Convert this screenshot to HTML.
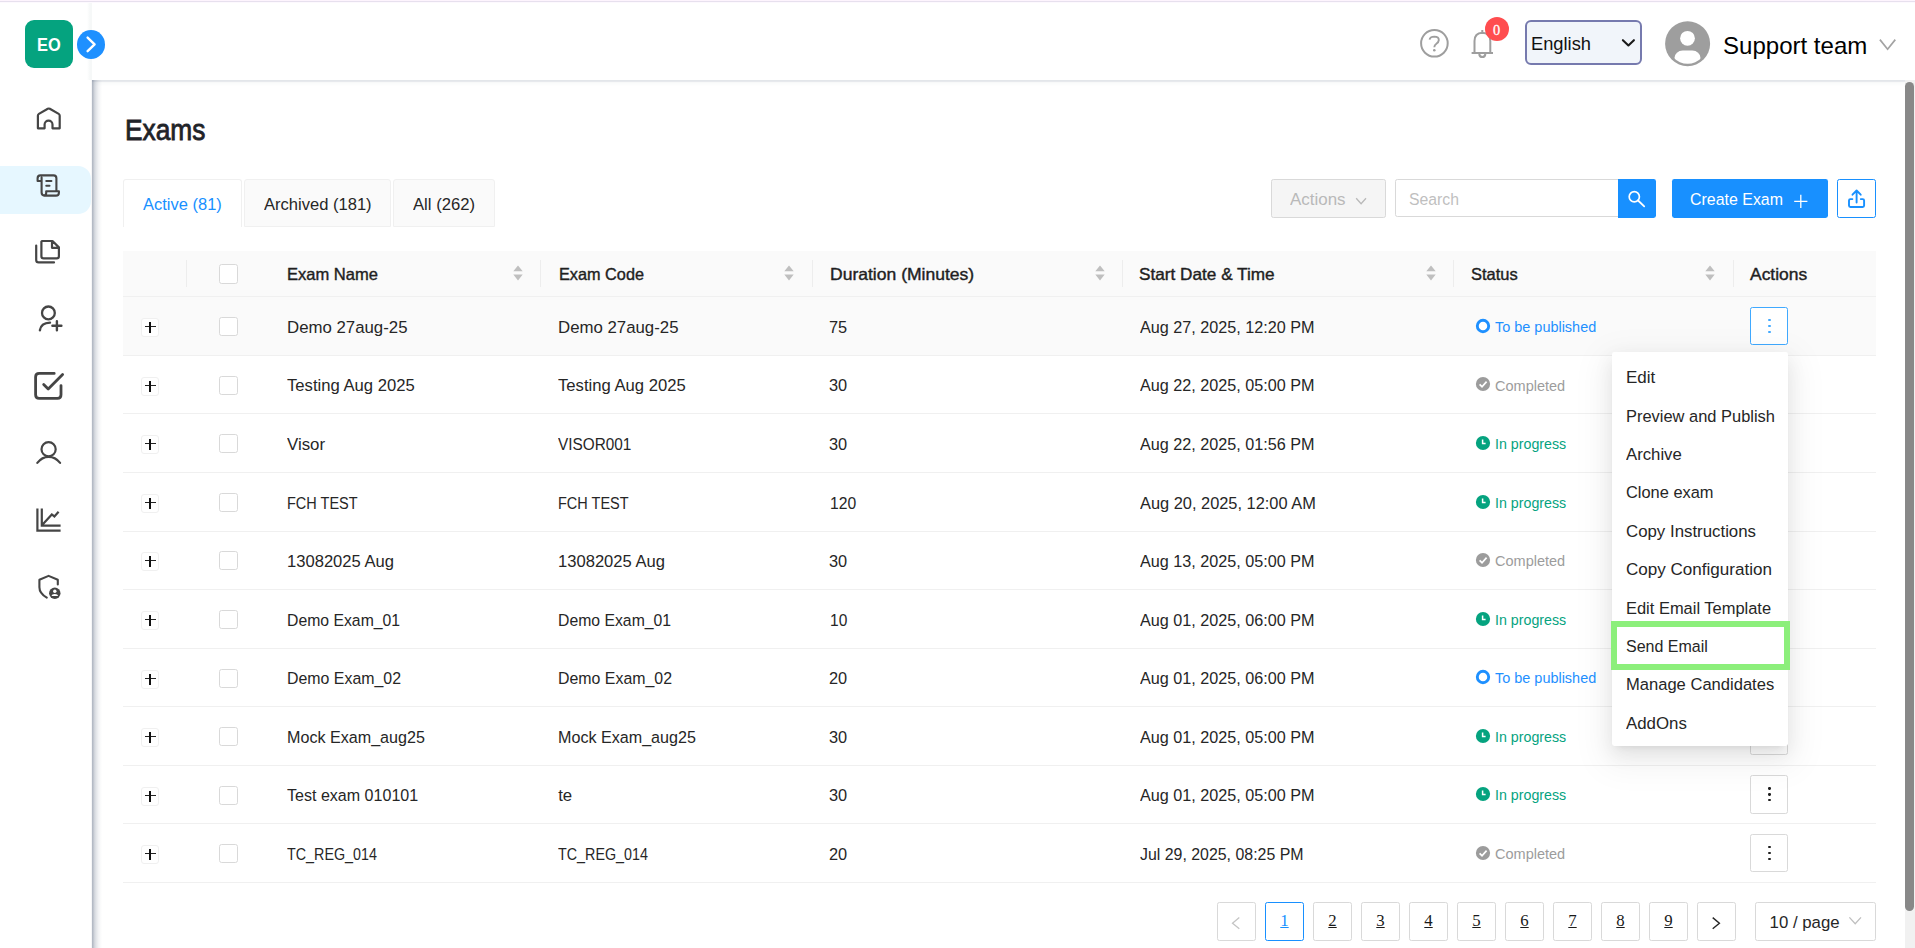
<!DOCTYPE html>
<html lang="en"><head><meta charset="utf-8"><title>Exams</title>
<style>
html,body{margin:0;padding:0}
body{width:1915px;height:948px;overflow:hidden;background:#fff;position:relative;font-family:'Liberation Sans', sans-serif;}
body>div,body>div>div{position:absolute}
.t{position:absolute;white-space:pre;font-family:'Liberation Sans', sans-serif}
svg{overflow:visible}
</style></head><body>
<div style="left:0px;top:0px;width:1915px;height:3px;background:linear-gradient(180deg,#fdf4fd 0 1px,#e7e0ee 1px 2px,#fdf9fe 2px 3px);z-index:50"></div>
<div style="left:0px;top:2px;width:92px;height:946px;background:#fff"></div>
<div style="left:92px;top:80px;width:1813px;height:868px;background:#fff"></div>
<div style="left:92px;top:80px;width:1813px;height:6px;background:linear-gradient(180deg,#e3e6ea 0px 1px,#e7e9ed 1px 2px,#f8f9f9 2px 3px,#fbfcfc 3px 4px,#fcfdfd 4px 5px,#fefefe 5px 6px)"></div>
<div style="left:91px;top:80px;width:11px;height:868px;background:linear-gradient(90deg,rgba(80,95,120,0.057) 0px 1px,rgba(80,95,120,0.429) 1px 2px,rgba(80,95,120,0.354) 2px 3px,rgba(80,95,120,0.257) 3px 4px,rgba(80,95,120,0.200) 4px 5px,rgba(80,95,120,0.154) 5px 6px,rgba(80,95,120,0.114) 6px 7px,rgba(80,95,120,0.074) 7px 8px,rgba(80,95,120,0.051) 8px 9px,rgba(80,95,120,0.029) 9px 10px,rgba(80,95,120,0.011) 10px 11px)"></div>
<div style="left:87px;top:3px;width:5px;height:77px;background:linear-gradient(90deg,rgba(246,248,248,0),rgba(246,248,248,1) 60%)"></div>
<div style="left:25px;top:20px;width:48px;height:48px;background:#05a37f;border-radius:9px"></div>
<span class="t" style="left:37.34px;top:34px;font-size:18px;line-height:23px;color:#fff;font-weight:700;transform:scaleX(0.9110);transform-origin:0 0;">EO</span>
<div style="left:76.8px;top:30px;width:28.3px;height:28.8px;background:#1e90ff;border-radius:50%"><svg width="28.5" height="28.5" viewBox="0 0 28.5 28.5" style="position:absolute;left:0;top:0"><path d="M10.6 7.6 L17.6 14.4 L10.6 21.2" fill="none" stroke="#fff" stroke-width="2.4" stroke-linecap="round" stroke-linejoin="round"/></svg></div>
<div style="left:0px;top:166px;width:91px;height:48px;background:#e6f7ff;border-radius:0 13px 13px 0"></div>
<svg style="position:absolute;left:0px;top:0px;" width="92" height="948" viewBox="0 0 92 948"><path d="M37.9 128.3 V115.7 Q37.9 114.5 38.9 113.9 L47.8 108.8 Q48.8 108.2 49.8 108.8 L58.7 113.9 Q59.7 114.5 59.7 115.7 V128.3 H52.5 V124.6 A3.95 3.95 0 0 0 44.6 124.6 V128.3 Z" fill="none" stroke="#454545" stroke-width="2.2" stroke-linecap="round" stroke-linejoin="round"/><path d="M41.6 181 H37.6 V178.2 Q37.6 175.4 40.4 175.4 H53.6 Q56.4 175.4 56.4 178.2 V191.2 M41.6 177.5 V192.6 Q41.6 195.6 44.6 195.6 H56 Q58.9 195.6 58.9 192.7 V191.2 H46.2 V192.8 Q46.2 195.6 43.9 195.6 M46.3 181 H51.4 M46.3 185.7 H49.5" fill="none" stroke="#454545" stroke-width="2.1" stroke-linecap="round" stroke-linejoin="round"/><path d="M42 241 H52.5 L58.9 247.4 V256.2 Q58.9 258.4 56.7 258.4 H43.6 Q41.4 258.4 41.4 256.2 V241.6 M52 241.2 V247.8 H58.6 M36.2 245.6 V260 Q36.2 262.4 38.6 262.4 H54" fill="none" stroke="#454545" stroke-width="2.2" stroke-linecap="round" stroke-linejoin="round"/><circle cx="48.4" cy="312.9" r="6.4" fill="none" stroke="#454545" stroke-width="2.3"/><path d="M39.9 330.2 Q41 322.9 50 322.6 M52.4 325.7 H61.4 M56.9 321.2 V330.2" fill="none" stroke="#454545" stroke-width="2.4" stroke-linecap="round" stroke-linejoin="round"/><path d="M54.2 373.4 H39.2 Q35.6 373.4 35.6 377 V394.8 Q35.6 398.4 39.2 398.4 H57.4 Q61 398.4 61 394.8 V385.6 M43.7 384.5 L48.2 389 L62.6 374.6" fill="none" stroke="#454545" stroke-width="2.8" stroke-linecap="round" stroke-linejoin="round"/><circle cx="48.6" cy="449.3" r="7.1" fill="none" stroke="#454545" stroke-width="2.2"/><path d="M37.3 462.9 Q42 456.9 48.6 456.9 Q55.4 456.9 60.1 462.9" fill="none" stroke="#454545" stroke-width="2.2" stroke-linecap="round" stroke-linejoin="round"/><path d="M37.4 508.4 V530.6 H60.6 M41.8 508.4 V525.6 H60.6 M42.6 524.4 L51.8 514.4 L54.4 516.4 L58.6 511.8" fill="none" stroke="#454545" stroke-width="2.2" stroke-linecap="butt" stroke-linejoin="miter"/><path d="M57.8 584.4 V579.8 L48.6 575.9 L39.4 579.8 V587.2 Q39.4 593.4 46.8 597.6" fill="none" stroke="#454545" stroke-width="2.1" stroke-linecap="round" stroke-linejoin="round"/><circle cx="54.8" cy="593.2" r="5.7" fill="#454545"/><circle cx="54.8" cy="591.3" r="1.7" fill="#fff"/><path d="M51.6 596 Q51.8 593.9 54.8 593.9 Q57.8 593.9 58 596 Z" fill="#fff"/></svg>
<svg style="position:absolute;left:1400px;top:0px;" width="515" height="80" viewBox="1400 0 515 80"><circle cx="1434.4" cy="43.3" r="13.3" fill="none" stroke="#9e9e9e" stroke-width="2"/><path d="M1429.6 39.6 Q1430 36.6 1434.4 36.6 Q1439 36.8 1438.8 40.2 Q1438.6 42.4 1436.4 43.8 Q1434.3 45.2 1434.3 47.2" fill="none" stroke="#9e9e9e" stroke-width="1.9" stroke-linecap="butt" stroke-linejoin="round"/><circle cx="1434.3" cy="50.3" r="1.3" fill="#9e9e9e"/><path d="M1474.5 53 V41 Q1474.5 33.2 1482.3 32.8 Q1490.3 33.2 1490.3 41 V53 M1471.6 53 H1493 M1479.2 54 Q1479.6 57 1482.3 57 Q1485 57 1485.4 54 M1482.3 32.8 V30" fill="none" stroke="#9e9e9e" stroke-width="2" stroke-linecap="butt" stroke-linejoin="miter"/><circle cx="1497" cy="28.9" r="12" fill="#ff4d4f"/></svg>
<span class="t" style="left:1493.06px;top:21px;font-size:14.4px;line-height:19px;color:#fff;font-family:'Liberation Serif', serif;-webkit-text-stroke:0.3px #fff;">0</span>
<div style="left:1525px;top:20px;width:117px;height:44.6px;background:#f1f5fa;border:2px solid #767aae;border-radius:6px;box-sizing:border-box"></div>
<span class="t" style="left:1531.41px;top:32px;font-size:18.6px;line-height:24px;color:#111;transform:scaleX(0.9830);transform-origin:0 0;">English</span>
<svg style="position:absolute;left:1618px;top:34px;" width="20" height="18" viewBox="0 0 20 18"><path d="M4.9 6.2 L10.4 11.4 L15.9 6.2" fill="none" stroke="#1a1a1a" stroke-width="2.1" stroke-linecap="round" stroke-linejoin="round"/></svg>
<svg style="position:absolute;left:1665px;top:21px;" width="46" height="46" viewBox="0 0 46 46"><defs><clipPath id="avc"><circle cx="22.6" cy="22.7" r="20"/></clipPath></defs>
<circle cx="22.6" cy="22.7" r="22.5" fill="#9e9e9e"/><circle cx="22.5" cy="17.3" r="7.4" fill="#fff"/>
<rect x="9.6" y="29.6" width="25.8" height="30" rx="8" ry="7" fill="#fff" clip-path="url(#avc)"/></svg>
<span class="t" style="left:1722.76px;top:30px;font-size:24px;line-height:31px;color:#000;transform:scaleX(1.0014);transform-origin:0 0;">Support team</span>
<svg style="position:absolute;left:1876px;top:34px;" width="24" height="22" viewBox="0 0 24 22"><path d="M3.9 5.6 L11.6 15.2 L19.3 5.6" fill="none" stroke="#a3a3a3" stroke-width="1.7" stroke-linecap="butt" stroke-linejoin="miter"/></svg>
<span class="t" style="left:124.67px;top:112px;font-size:28.8px;line-height:37px;color:#1f2328;-webkit-text-stroke:0.8px #1f2328;transform:scaleX(0.9138);transform-origin:0 0;">Exams</span>
<div style="left:123px;top:179px;width:118.6px;height:48px;background:#fff;border:1px solid #f0f0f0;border-bottom:none;border-radius:3px 3px 0 0;box-sizing:border-box"></div>
<div style="left:244px;top:179px;width:146.8px;height:48px;background:#fafafa;border:1px solid #f0f0f0;border-radius:3px 3px 0 0;box-sizing:border-box"></div>
<div style="left:393px;top:179px;width:102px;height:48px;background:#fafafa;border:1px solid #f0f0f0;border-radius:3px 3px 0 0;box-sizing:border-box"></div>
<span class="t" style="left:143.00px;top:194px;font-size:16.8px;line-height:22px;color:#1890ff;transform:scaleX(0.9825);transform-origin:0 0;">Active (81)</span>
<span class="t" style="left:263.80px;top:194px;font-size:16.8px;line-height:22px;color:#262626;transform:scaleX(0.9859);transform-origin:0 0;">Archived (181)</span>
<span class="t" style="left:413.00px;top:194px;font-size:16.8px;line-height:22px;color:#262626;transform:scaleX(0.9920);transform-origin:0 0;">All (262)</span>
<div style="left:1271px;top:179px;width:115px;height:38.5px;background:#f5f5f5;border:1px solid #d9d9d9;border-radius:2.4px;box-sizing:border-box"></div>
<span class="t" style="left:1289.70px;top:189px;font-size:16.8px;line-height:22px;color:#b9b9b9;transform:scaleX(1.0103);transform-origin:0 0;">Actions</span>
<svg style="position:absolute;left:1353px;top:194px;" width="16" height="14" viewBox="0 0 16 14"><path d="M3.2 4.3 L8.1 9.8 L13 4.3" fill="none" stroke="#b9b9b9" stroke-width="1.3" stroke-linecap="butt" stroke-linejoin="miter"/></svg>
<div style="left:1395px;top:179px;width:224px;height:37.6px;background:#fff;border:1px solid #d9d9d9;border-radius:2.4px 0 0 2.4px;box-sizing:border-box"></div>
<span class="t" style="left:1408.90px;top:189px;font-size:16.8px;line-height:22px;color:#bfbfbf;transform:scaleX(0.9403);transform-origin:0 0;">Search</span>
<div style="left:1618px;top:179px;width:38px;height:38.5px;background:#1890ff;border-radius:0 2.4px 2.4px 0"></div>
<svg style="position:absolute;left:1626px;top:188px;" width="22" height="22" viewBox="0 0 22 22"><circle cx="8.3" cy="8.7" r="5.1" fill="none" stroke="#fff" stroke-width="1.7"/><path d="M12.1 12.5 L18.2 18.4" fill="none" stroke="#fff" stroke-width="1.8" stroke-linecap="round" stroke-linejoin="round"/></svg>
<div style="left:1672px;top:179px;width:156px;height:38.5px;background:#1890ff;border-radius:2.4px"></div>
<span class="t" style="left:1689.50px;top:189px;font-size:16.8px;line-height:22px;color:#fff;transform:scaleX(0.9496);transform-origin:0 0;">Create Exam</span>
<svg style="position:absolute;left:1791.7px;top:191.8px;" width="18" height="18" viewBox="0 0 18 18"><path d="M2.2 9.4 H15.4 M8.8 2.8 V16" fill="none" stroke="#fff" stroke-width="1.3" stroke-linecap="butt" stroke-linejoin="round"/></svg>
<div style="left:1837px;top:179px;width:39px;height:38.5px;background:#fff;border:1px solid #1890ff;border-radius:2.4px;box-sizing:border-box"></div>
<svg style="position:absolute;left:1846px;top:187.5px;" width="22" height="22" viewBox="0 0 22 22"><path d="M6.4 11.1 H4.4 Q3 11.1 3 12.5 V17.6 Q3 19 4.4 19 H16.7 Q18.1 19 18.1 17.6 V12.5 Q18.1 11.1 16.7 11.1 H14.8 M10.6 14.6 V2.8 M6.5 6.7 L10.6 2.5 L14.7 6.7" fill="none" stroke="#1890ff" stroke-width="1.9" stroke-linecap="round" stroke-linejoin="round"/></svg>
<div style="left:123px;top:251px;width:1753px;height:45px;background:#fafafa"></div>
<div style="left:123px;top:296px;width:1753px;height:1px;background:#f0f0f0"></div>
<div style="left:186px;top:260px;width:1px;height:27px;background:#ededed"></div>
<div style="left:540px;top:260px;width:1px;height:27px;background:#ededed"></div>
<div style="left:811.5px;top:260px;width:1px;height:27px;background:#ededed"></div>
<div style="left:1122px;top:260px;width:1px;height:27px;background:#ededed"></div>
<div style="left:1453px;top:260px;width:1px;height:27px;background:#ededed"></div>
<div style="left:1732.5px;top:260px;width:1px;height:27px;background:#ededed"></div>
<svg style="position:absolute;left:511.6px;top:263px;" width="12" height="20" viewBox="0 0 12 20"><path d="M6 2.4 L10.7 8.2 H1.3 Z M6 17.4 L10.7 11.6 H1.3 Z" fill="#bfbfbf"/></svg>
<svg style="position:absolute;left:783.4px;top:263px;" width="12" height="20" viewBox="0 0 12 20"><path d="M6 2.4 L10.7 8.2 H1.3 Z M6 17.4 L10.7 11.6 H1.3 Z" fill="#bfbfbf"/></svg>
<svg style="position:absolute;left:1093.5px;top:263px;" width="12" height="20" viewBox="0 0 12 20"><path d="M6 2.4 L10.7 8.2 H1.3 Z M6 17.4 L10.7 11.6 H1.3 Z" fill="#bfbfbf"/></svg>
<svg style="position:absolute;left:1424.5px;top:263px;" width="12" height="20" viewBox="0 0 12 20"><path d="M6 2.4 L10.7 8.2 H1.3 Z M6 17.4 L10.7 11.6 H1.3 Z" fill="#bfbfbf"/></svg>
<svg style="position:absolute;left:1703.6px;top:263px;" width="12" height="20" viewBox="0 0 12 20"><path d="M6 2.4 L10.7 8.2 H1.3 Z M6 17.4 L10.7 11.6 H1.3 Z" fill="#bfbfbf"/></svg>
<span class="t" style="left:287.41px;top:264px;font-size:16.5px;line-height:21px;color:#1f1f1f;-webkit-text-stroke:0.4px #1f1f1f;transform:scaleX(1.0022);transform-origin:0 0;">Exam Name</span>
<span class="t" style="left:558.51px;top:264px;font-size:16.5px;line-height:21px;color:#1f1f1f;-webkit-text-stroke:0.4px #1f1f1f;transform:scaleX(0.9857);transform-origin:0 0;">Exam Code</span>
<span class="t" style="left:829.61px;top:264px;font-size:16.5px;line-height:21px;color:#1f1f1f;-webkit-text-stroke:0.4px #1f1f1f;transform:scaleX(1.0624);transform-origin:0 0;">Duration (Minutes)</span>
<span class="t" style="left:1139.21px;top:264px;font-size:16.5px;line-height:21px;color:#1f1f1f;-webkit-text-stroke:0.4px #1f1f1f;transform:scaleX(1.0420);transform-origin:0 0;">Start Date &amp; Time</span>
<span class="t" style="left:1471.01px;top:264px;font-size:16.5px;line-height:21px;color:#1f1f1f;-webkit-text-stroke:0.4px #1f1f1f;transform:scaleX(0.9979);transform-origin:0 0;">Status</span>
<span class="t" style="left:1749.61px;top:264px;font-size:16.5px;line-height:21px;color:#1f1f1f;-webkit-text-stroke:0.4px #1f1f1f;transform:scaleX(1.0568);transform-origin:0 0;">Actions</span>
<div style="left:219px;top:264px;width:19px;height:19.5px;background:#fff;border:1px solid #d9d9d9;border-radius:2.6px;box-sizing:border-box"></div>
<div style="left:123px;top:297px;width:1753px;height:58px;background:#fafafa"></div>
<div style="left:123px;top:355px;width:1753px;height:1px;background:#f0f0f0"></div>
<div style="left:141px;top:318px;width:18px;height:18.6px;background:#fff;border:1px solid #f0f0f0;border-radius:3px;box-sizing:border-box"></div>
<div style="left:145.3px;top:326.4px;width:10.5px;height:1.1px;background:#222"></div>
<div style="left:149.35px;top:321.9px;width:1.3px;height:11px;background:#111"></div>
<div style="left:219px;top:317px;width:19px;height:19px;background:#fff;border:1px solid #d9d9d9;border-radius:2.6px;box-sizing:border-box"></div>
<span class="t" style="left:286.90px;top:317px;font-size:16.8px;line-height:22px;color:#262626;transform:scaleX(1.0012);transform-origin:0 0;">Demo 27aug-25</span>
<span class="t" style="left:558.20px;top:317px;font-size:16.8px;line-height:22px;color:#262626;transform:scaleX(1.0012);transform-origin:0 0;">Demo 27aug-25</span>
<span class="t" style="left:829.00px;top:317px;font-size:16.8px;line-height:22px;color:#262626;transform:scaleX(0.9747);transform-origin:0 0;">75</span>
<span class="t" style="left:1139.80px;top:317px;font-size:16.8px;line-height:22px;color:#262626;transform:scaleX(0.9646);transform-origin:0 0;">Aug 27, 2025, 12:20 PM</span>
<svg style="position:absolute;left:1475px;top:317.9px;" width="16" height="16" viewBox="0 0 16 16"><circle cx="8" cy="8" r="5.7" fill="#fff" stroke="#1e90ff" stroke-width="2.9"/></svg>
<span class="t" style="left:1494.71px;top:318px;font-size:14.4px;line-height:19px;color:#1e90ff;transform:scaleX(1.0038);transform-origin:0 0;">To be published</span>
<div style="left:1750px;top:306.8px;width:38.4px;height:38.4px;background:#fff;border:1px solid #40a9ff;border-radius:2.4px;box-sizing:border-box"><i style="position:absolute;left:17.45px;top:11.2px;width:2.3px;height:2.3px;border-radius:50%;background:#40a9ff"></i><i style="position:absolute;left:17.45px;top:17px;width:2.3px;height:2.3px;border-radius:50%;background:#40a9ff"></i><i style="position:absolute;left:17.45px;top:22.8px;width:2.3px;height:2.3px;border-radius:50%;background:#40a9ff"></i></div>
<div style="left:123px;top:413px;width:1753px;height:1px;background:#f0f0f0"></div>
<div style="left:141px;top:377px;width:18px;height:18.6px;background:#fff;border:1px solid #f0f0f0;border-radius:3px;box-sizing:border-box"></div>
<div style="left:145.3px;top:385.4px;width:10.5px;height:1.1px;background:#222"></div>
<div style="left:149.35px;top:380.9px;width:1.3px;height:11px;background:#111"></div>
<div style="left:219px;top:376px;width:19px;height:19px;background:#fff;border:1px solid #d9d9d9;border-radius:2.6px;box-sizing:border-box"></div>
<span class="t" style="left:286.90px;top:375px;font-size:16.8px;line-height:22px;color:#262626;transform:scaleX(0.9925);transform-origin:0 0;">Testing Aug 2025</span>
<span class="t" style="left:558.20px;top:375px;font-size:16.8px;line-height:22px;color:#262626;transform:scaleX(0.9925);transform-origin:0 0;">Testing Aug 2025</span>
<span class="t" style="left:829.00px;top:375px;font-size:16.8px;line-height:22px;color:#262626;transform:scaleX(0.9747);transform-origin:0 0;">30</span>
<span class="t" style="left:1139.80px;top:375px;font-size:16.8px;line-height:22px;color:#262626;transform:scaleX(0.9646);transform-origin:0 0;">Aug 22, 2025, 05:00 PM</span>
<svg style="position:absolute;left:1475px;top:376.4px;" width="16" height="16" viewBox="0 0 16 16"><circle cx="8" cy="8" r="7.1" fill="#9c9c9c"/><path d="M4.6 8.3 L7 10.7 L11.6 5.6" fill="none" stroke="#fff" stroke-width="1.7" stroke-linecap="butt" stroke-linejoin="miter"/></svg>
<span class="t" style="left:1494.71px;top:377px;font-size:14.4px;line-height:19px;color:#9c9c9c;transform:scaleX(1.0087);transform-origin:0 0;">Completed</span>
<div style="left:1750px;top:365.3px;width:38.4px;height:38.4px;background:#fff;border:1px solid #d9d9d9;border-radius:2.4px;box-sizing:border-box"><i style="position:absolute;left:17.45px;top:11.2px;width:2.3px;height:2.3px;border-radius:50%;background:#1f1f1f"></i><i style="position:absolute;left:17.45px;top:17px;width:2.3px;height:2.3px;border-radius:50%;background:#1f1f1f"></i><i style="position:absolute;left:17.45px;top:22.8px;width:2.3px;height:2.3px;border-radius:50%;background:#1f1f1f"></i></div>
<div style="left:123px;top:472px;width:1753px;height:1px;background:#f0f0f0"></div>
<div style="left:141px;top:435px;width:18px;height:18.6px;background:#fff;border:1px solid #f0f0f0;border-radius:3px;box-sizing:border-box"></div>
<div style="left:145.3px;top:443.4px;width:10.5px;height:1.1px;background:#222"></div>
<div style="left:149.35px;top:438.9px;width:1.3px;height:11px;background:#111"></div>
<div style="left:219px;top:434px;width:19px;height:19px;background:#fff;border:1px solid #d9d9d9;border-radius:2.6px;box-sizing:border-box"></div>
<span class="t" style="left:286.90px;top:434px;font-size:16.8px;line-height:22px;color:#262626;transform:scaleX(1.0043);transform-origin:0 0;">Visor</span>
<span class="t" style="left:558.20px;top:434px;font-size:16.8px;line-height:22px;color:#262626;transform:scaleX(0.9136);transform-origin:0 0;">VISOR001</span>
<span class="t" style="left:829.00px;top:434px;font-size:16.8px;line-height:22px;color:#262626;transform:scaleX(0.9747);transform-origin:0 0;">30</span>
<span class="t" style="left:1139.80px;top:434px;font-size:16.8px;line-height:22px;color:#262626;transform:scaleX(0.9646);transform-origin:0 0;">Aug 22, 2025, 01:56 PM</span>
<svg style="position:absolute;left:1475px;top:434.9px;" width="16" height="16" viewBox="0 0 16 16"><circle cx="8" cy="8" r="7.1" fill="#05a37f"/><path d="M7.6 4.6 V8.6 H10.6" fill="none" stroke="#fff" stroke-width="1.5" stroke-linecap="butt" stroke-linejoin="miter"/></svg>
<span class="t" style="left:1495.11px;top:435px;font-size:14.4px;line-height:19px;color:#05a37f;transform:scaleX(0.9889);transform-origin:0 0;">In progress</span>
<div style="left:1750px;top:423.8px;width:38.4px;height:38.4px;background:#fff;border:1px solid #d9d9d9;border-radius:2.4px;box-sizing:border-box"><i style="position:absolute;left:17.45px;top:11.2px;width:2.3px;height:2.3px;border-radius:50%;background:#1f1f1f"></i><i style="position:absolute;left:17.45px;top:17px;width:2.3px;height:2.3px;border-radius:50%;background:#1f1f1f"></i><i style="position:absolute;left:17.45px;top:22.8px;width:2.3px;height:2.3px;border-radius:50%;background:#1f1f1f"></i></div>
<div style="left:123px;top:531px;width:1753px;height:1px;background:#f0f0f0"></div>
<div style="left:141px;top:494px;width:18px;height:18.6px;background:#fff;border:1px solid #f0f0f0;border-radius:3px;box-sizing:border-box"></div>
<div style="left:145.3px;top:502.4px;width:10.5px;height:1.1px;background:#222"></div>
<div style="left:149.35px;top:497.9px;width:1.3px;height:11px;background:#111"></div>
<div style="left:219px;top:493px;width:19px;height:19px;background:#fff;border:1px solid #d9d9d9;border-radius:2.6px;box-sizing:border-box"></div>
<span class="t" style="left:286.90px;top:493px;font-size:16.8px;line-height:22px;color:#262626;transform:scaleX(0.8636);transform-origin:0 0;">FCH TEST</span>
<span class="t" style="left:558.20px;top:493px;font-size:16.8px;line-height:22px;color:#262626;transform:scaleX(0.8636);transform-origin:0 0;">FCH TEST</span>
<span class="t" style="left:829.90px;top:493px;font-size:16.8px;line-height:22px;color:#262626;transform:scaleX(0.9357);transform-origin:0 0;">120</span>
<span class="t" style="left:1139.80px;top:493px;font-size:16.8px;line-height:22px;color:#262626;transform:scaleX(0.9762);transform-origin:0 0;">Aug 20, 2025, 12:00 AM</span>
<svg style="position:absolute;left:1475px;top:493.9px;" width="16" height="16" viewBox="0 0 16 16"><circle cx="8" cy="8" r="7.1" fill="#05a37f"/><path d="M7.6 4.6 V8.6 H10.6" fill="none" stroke="#fff" stroke-width="1.5" stroke-linecap="butt" stroke-linejoin="miter"/></svg>
<span class="t" style="left:1495.11px;top:494px;font-size:14.4px;line-height:19px;color:#05a37f;transform:scaleX(0.9889);transform-origin:0 0;">In progress</span>
<div style="left:1750px;top:482.8px;width:38.4px;height:38.4px;background:#fff;border:1px solid #d9d9d9;border-radius:2.4px;box-sizing:border-box"><i style="position:absolute;left:17.45px;top:11.2px;width:2.3px;height:2.3px;border-radius:50%;background:#1f1f1f"></i><i style="position:absolute;left:17.45px;top:17px;width:2.3px;height:2.3px;border-radius:50%;background:#1f1f1f"></i><i style="position:absolute;left:17.45px;top:22.8px;width:2.3px;height:2.3px;border-radius:50%;background:#1f1f1f"></i></div>
<div style="left:123px;top:589px;width:1753px;height:1px;background:#f0f0f0"></div>
<div style="left:141px;top:552px;width:18px;height:18.6px;background:#fff;border:1px solid #f0f0f0;border-radius:3px;box-sizing:border-box"></div>
<div style="left:145.3px;top:560.4px;width:10.5px;height:1.1px;background:#222"></div>
<div style="left:149.35px;top:555.9px;width:1.3px;height:11px;background:#111"></div>
<div style="left:219px;top:551px;width:19px;height:19px;background:#fff;border:1px solid #d9d9d9;border-radius:2.6px;box-sizing:border-box"></div>
<span class="t" style="left:286.90px;top:551px;font-size:16.8px;line-height:22px;color:#262626;transform:scaleX(0.9883);transform-origin:0 0;">13082025 Aug</span>
<span class="t" style="left:558.20px;top:551px;font-size:16.8px;line-height:22px;color:#262626;transform:scaleX(0.9883);transform-origin:0 0;">13082025 Aug</span>
<span class="t" style="left:829.00px;top:551px;font-size:16.8px;line-height:22px;color:#262626;transform:scaleX(0.9747);transform-origin:0 0;">30</span>
<span class="t" style="left:1139.80px;top:551px;font-size:16.8px;line-height:22px;color:#262626;transform:scaleX(0.9646);transform-origin:0 0;">Aug 13, 2025, 05:00 PM</span>
<svg style="position:absolute;left:1475px;top:552.4px;" width="16" height="16" viewBox="0 0 16 16"><circle cx="8" cy="8" r="7.1" fill="#9c9c9c"/><path d="M4.6 8.3 L7 10.7 L11.6 5.6" fill="none" stroke="#fff" stroke-width="1.7" stroke-linecap="butt" stroke-linejoin="miter"/></svg>
<span class="t" style="left:1494.71px;top:552px;font-size:14.4px;line-height:19px;color:#9c9c9c;transform:scaleX(1.0087);transform-origin:0 0;">Completed</span>
<div style="left:1750px;top:541.3px;width:38.4px;height:38.4px;background:#fff;border:1px solid #d9d9d9;border-radius:2.4px;box-sizing:border-box"><i style="position:absolute;left:17.45px;top:11.2px;width:2.3px;height:2.3px;border-radius:50%;background:#1f1f1f"></i><i style="position:absolute;left:17.45px;top:17px;width:2.3px;height:2.3px;border-radius:50%;background:#1f1f1f"></i><i style="position:absolute;left:17.45px;top:22.8px;width:2.3px;height:2.3px;border-radius:50%;background:#1f1f1f"></i></div>
<div style="left:123px;top:648px;width:1753px;height:1px;background:#f0f0f0"></div>
<div style="left:141px;top:611px;width:18px;height:18.6px;background:#fff;border:1px solid #f0f0f0;border-radius:3px;box-sizing:border-box"></div>
<div style="left:145.3px;top:619.4px;width:10.5px;height:1.1px;background:#222"></div>
<div style="left:149.35px;top:614.9px;width:1.3px;height:11px;background:#111"></div>
<div style="left:219px;top:610px;width:19px;height:19px;background:#fff;border:1px solid #d9d9d9;border-radius:2.6px;box-sizing:border-box"></div>
<span class="t" style="left:286.90px;top:610px;font-size:16.8px;line-height:22px;color:#262626;transform:scaleX(0.9399);transform-origin:0 0;">Demo Exam_01</span>
<span class="t" style="left:558.20px;top:610px;font-size:16.8px;line-height:22px;color:#262626;transform:scaleX(0.9399);transform-origin:0 0;">Demo Exam_01</span>
<span class="t" style="left:829.90px;top:610px;font-size:16.8px;line-height:22px;color:#262626;transform:scaleX(0.9265);transform-origin:0 0;">10</span>
<span class="t" style="left:1139.80px;top:610px;font-size:16.8px;line-height:22px;color:#262626;transform:scaleX(0.9646);transform-origin:0 0;">Aug 01, 2025, 06:00 PM</span>
<svg style="position:absolute;left:1475px;top:610.9px;" width="16" height="16" viewBox="0 0 16 16"><circle cx="8" cy="8" r="7.1" fill="#05a37f"/><path d="M7.6 4.6 V8.6 H10.6" fill="none" stroke="#fff" stroke-width="1.5" stroke-linecap="butt" stroke-linejoin="miter"/></svg>
<span class="t" style="left:1495.11px;top:611px;font-size:14.4px;line-height:19px;color:#05a37f;transform:scaleX(0.9889);transform-origin:0 0;">In progress</span>
<div style="left:1750px;top:599.8px;width:38.4px;height:38.4px;background:#fff;border:1px solid #d9d9d9;border-radius:2.4px;box-sizing:border-box"><i style="position:absolute;left:17.45px;top:11.2px;width:2.3px;height:2.3px;border-radius:50%;background:#1f1f1f"></i><i style="position:absolute;left:17.45px;top:17px;width:2.3px;height:2.3px;border-radius:50%;background:#1f1f1f"></i><i style="position:absolute;left:17.45px;top:22.8px;width:2.3px;height:2.3px;border-radius:50%;background:#1f1f1f"></i></div>
<div style="left:123px;top:706px;width:1753px;height:1px;background:#f0f0f0"></div>
<div style="left:141px;top:670px;width:18px;height:18.6px;background:#fff;border:1px solid #f0f0f0;border-radius:3px;box-sizing:border-box"></div>
<div style="left:145.3px;top:678.4px;width:10.5px;height:1.1px;background:#222"></div>
<div style="left:149.35px;top:673.9px;width:1.3px;height:11px;background:#111"></div>
<div style="left:219px;top:669px;width:19px;height:19px;background:#fff;border:1px solid #d9d9d9;border-radius:2.6px;box-sizing:border-box"></div>
<span class="t" style="left:286.90px;top:668px;font-size:16.8px;line-height:22px;color:#262626;transform:scaleX(0.9474);transform-origin:0 0;">Demo Exam_02</span>
<span class="t" style="left:558.20px;top:668px;font-size:16.8px;line-height:22px;color:#262626;transform:scaleX(0.9474);transform-origin:0 0;">Demo Exam_02</span>
<span class="t" style="left:829.00px;top:668px;font-size:16.8px;line-height:22px;color:#262626;transform:scaleX(0.9747);transform-origin:0 0;">20</span>
<span class="t" style="left:1139.80px;top:668px;font-size:16.8px;line-height:22px;color:#262626;transform:scaleX(0.9646);transform-origin:0 0;">Aug 01, 2025, 06:00 PM</span>
<svg style="position:absolute;left:1475px;top:669.4px;" width="16" height="16" viewBox="0 0 16 16"><circle cx="8" cy="8" r="5.7" fill="#fff" stroke="#1e90ff" stroke-width="2.9"/></svg>
<span class="t" style="left:1494.71px;top:669px;font-size:14.4px;line-height:19px;color:#1e90ff;transform:scaleX(1.0038);transform-origin:0 0;">To be published</span>
<div style="left:1750px;top:658.3px;width:38.4px;height:38.4px;background:#fff;border:1px solid #d9d9d9;border-radius:2.4px;box-sizing:border-box"><i style="position:absolute;left:17.45px;top:11.2px;width:2.3px;height:2.3px;border-radius:50%;background:#1f1f1f"></i><i style="position:absolute;left:17.45px;top:17px;width:2.3px;height:2.3px;border-radius:50%;background:#1f1f1f"></i><i style="position:absolute;left:17.45px;top:22.8px;width:2.3px;height:2.3px;border-radius:50%;background:#1f1f1f"></i></div>
<div style="left:123px;top:765px;width:1753px;height:1px;background:#f0f0f0"></div>
<div style="left:141px;top:728px;width:18px;height:18.6px;background:#fff;border:1px solid #f0f0f0;border-radius:3px;box-sizing:border-box"></div>
<div style="left:145.3px;top:736.4px;width:10.5px;height:1.1px;background:#222"></div>
<div style="left:149.35px;top:731.9px;width:1.3px;height:11px;background:#111"></div>
<div style="left:219px;top:727px;width:19px;height:19px;background:#fff;border:1px solid #d9d9d9;border-radius:2.6px;box-sizing:border-box"></div>
<span class="t" style="left:286.90px;top:727px;font-size:16.8px;line-height:22px;color:#262626;transform:scaleX(0.9599);transform-origin:0 0;">Mock Exam_aug25</span>
<span class="t" style="left:558.20px;top:727px;font-size:16.8px;line-height:22px;color:#262626;transform:scaleX(0.9599);transform-origin:0 0;">Mock Exam_aug25</span>
<span class="t" style="left:829.00px;top:727px;font-size:16.8px;line-height:22px;color:#262626;transform:scaleX(0.9747);transform-origin:0 0;">30</span>
<span class="t" style="left:1139.80px;top:727px;font-size:16.8px;line-height:22px;color:#262626;transform:scaleX(0.9646);transform-origin:0 0;">Aug 01, 2025, 05:00 PM</span>
<svg style="position:absolute;left:1475px;top:727.9px;" width="16" height="16" viewBox="0 0 16 16"><circle cx="8" cy="8" r="7.1" fill="#05a37f"/><path d="M7.6 4.6 V8.6 H10.6" fill="none" stroke="#fff" stroke-width="1.5" stroke-linecap="butt" stroke-linejoin="miter"/></svg>
<span class="t" style="left:1495.11px;top:728px;font-size:14.4px;line-height:19px;color:#05a37f;transform:scaleX(0.9889);transform-origin:0 0;">In progress</span>
<div style="left:1750px;top:716.8px;width:38.4px;height:38.4px;background:#fff;border:1px solid #d9d9d9;border-radius:2.4px;box-sizing:border-box"><i style="position:absolute;left:17.45px;top:11.2px;width:2.3px;height:2.3px;border-radius:50%;background:#1f1f1f"></i><i style="position:absolute;left:17.45px;top:17px;width:2.3px;height:2.3px;border-radius:50%;background:#1f1f1f"></i><i style="position:absolute;left:17.45px;top:22.8px;width:2.3px;height:2.3px;border-radius:50%;background:#1f1f1f"></i></div>
<div style="left:123px;top:823px;width:1753px;height:1px;background:#f0f0f0"></div>
<div style="left:141px;top:787px;width:18px;height:18.6px;background:#fff;border:1px solid #f0f0f0;border-radius:3px;box-sizing:border-box"></div>
<div style="left:145.3px;top:795.4px;width:10.5px;height:1.1px;background:#222"></div>
<div style="left:149.35px;top:790.9px;width:1.3px;height:11px;background:#111"></div>
<div style="left:219px;top:786px;width:19px;height:19px;background:#fff;border:1px solid #d9d9d9;border-radius:2.6px;box-sizing:border-box"></div>
<span class="t" style="left:286.90px;top:785px;font-size:16.8px;line-height:22px;color:#262626;transform:scaleX(0.9567);transform-origin:0 0;">Test exam 010101</span>
<span class="t" style="left:558.20px;top:785px;font-size:16.8px;line-height:22px;color:#262626;">te</span>
<span class="t" style="left:829.00px;top:785px;font-size:16.8px;line-height:22px;color:#262626;transform:scaleX(0.9747);transform-origin:0 0;">30</span>
<span class="t" style="left:1139.80px;top:785px;font-size:16.8px;line-height:22px;color:#262626;transform:scaleX(0.9646);transform-origin:0 0;">Aug 01, 2025, 05:00 PM</span>
<svg style="position:absolute;left:1475px;top:786.4px;" width="16" height="16" viewBox="0 0 16 16"><circle cx="8" cy="8" r="7.1" fill="#05a37f"/><path d="M7.6 4.6 V8.6 H10.6" fill="none" stroke="#fff" stroke-width="1.5" stroke-linecap="butt" stroke-linejoin="miter"/></svg>
<span class="t" style="left:1495.11px;top:786px;font-size:14.4px;line-height:19px;color:#05a37f;transform:scaleX(0.9889);transform-origin:0 0;">In progress</span>
<div style="left:1750px;top:775.3px;width:38.4px;height:38.4px;background:#fff;border:1px solid #d9d9d9;border-radius:2.4px;box-sizing:border-box"><i style="position:absolute;left:17.45px;top:11.2px;width:2.3px;height:2.3px;border-radius:50%;background:#1f1f1f"></i><i style="position:absolute;left:17.45px;top:17px;width:2.3px;height:2.3px;border-radius:50%;background:#1f1f1f"></i><i style="position:absolute;left:17.45px;top:22.8px;width:2.3px;height:2.3px;border-radius:50%;background:#1f1f1f"></i></div>
<div style="left:123px;top:882px;width:1753px;height:1px;background:#f0f0f0"></div>
<div style="left:141px;top:845px;width:18px;height:18.6px;background:#fff;border:1px solid #f0f0f0;border-radius:3px;box-sizing:border-box"></div>
<div style="left:145.3px;top:853.4px;width:10.5px;height:1.1px;background:#222"></div>
<div style="left:149.35px;top:848.9px;width:1.3px;height:11px;background:#111"></div>
<div style="left:219px;top:844px;width:19px;height:19px;background:#fff;border:1px solid #d9d9d9;border-radius:2.6px;box-sizing:border-box"></div>
<span class="t" style="left:286.90px;top:844px;font-size:16.8px;line-height:22px;color:#262626;transform:scaleX(0.8529);transform-origin:0 0;">TC_REG_014</span>
<span class="t" style="left:558.20px;top:844px;font-size:16.8px;line-height:22px;color:#262626;transform:scaleX(0.8529);transform-origin:0 0;">TC_REG_014</span>
<span class="t" style="left:829.00px;top:844px;font-size:16.8px;line-height:22px;color:#262626;transform:scaleX(0.9747);transform-origin:0 0;">20</span>
<span class="t" style="left:1139.80px;top:844px;font-size:16.8px;line-height:22px;color:#262626;transform:scaleX(0.9473);transform-origin:0 0;">Jul 29, 2025, 08:25 PM</span>
<svg style="position:absolute;left:1475px;top:844.9px;" width="16" height="16" viewBox="0 0 16 16"><circle cx="8" cy="8" r="7.1" fill="#9c9c9c"/><path d="M4.6 8.3 L7 10.7 L11.6 5.6" fill="none" stroke="#fff" stroke-width="1.7" stroke-linecap="butt" stroke-linejoin="miter"/></svg>
<span class="t" style="left:1494.71px;top:845px;font-size:14.4px;line-height:19px;color:#9c9c9c;transform:scaleX(1.0087);transform-origin:0 0;">Completed</span>
<div style="left:1750px;top:833.8px;width:38.4px;height:38.4px;background:#fff;border:1px solid #d9d9d9;border-radius:2.4px;box-sizing:border-box"><i style="position:absolute;left:17.45px;top:11.2px;width:2.3px;height:2.3px;border-radius:50%;background:#1f1f1f"></i><i style="position:absolute;left:17.45px;top:17px;width:2.3px;height:2.3px;border-radius:50%;background:#1f1f1f"></i><i style="position:absolute;left:17.45px;top:22.8px;width:2.3px;height:2.3px;border-radius:50%;background:#1f1f1f"></i></div>
<div style="left:1217.3px;top:902px;width:38.4px;height:38.6px;background:#fff;border:1px solid #d9d9d9;border-radius:2.4px;box-sizing:border-box"></div>
<svg style="position:absolute;left:1228.3px;top:913px;" width="16" height="18" viewBox="0 0 16 18"><path d="M11.3 4.6 L4.5 10.2 L11.3 15.8" fill="none" stroke="#c4c4c4" stroke-width="1.3" stroke-linecap="butt" stroke-linejoin="miter"/></svg>
<div style="left:1265.3px;top:902px;width:38.4px;height:38.6px;background:#fff;border:1px solid #1890ff;border-radius:2.4px;box-sizing:border-box"></div>
<span class="t" style="left:1280.30px;top:910px;font-size:16.8px;line-height:22px;color:#1890ff;font-family:'Liberation Serif', serif;text-decoration:underline;text-decoration-thickness:1px;text-underline-offset:1px;">1</span>
<div style="left:1313.3px;top:902px;width:38.4px;height:38.6px;background:#fff;border:1px solid #d9d9d9;border-radius:2.4px;box-sizing:border-box"></div>
<span class="t" style="left:1328.30px;top:910px;font-size:16.8px;line-height:22px;color:#1a1a1a;font-family:'Liberation Serif', serif;text-decoration:underline;text-decoration-thickness:1px;text-underline-offset:1px;">2</span>
<div style="left:1361.3px;top:902px;width:38.4px;height:38.6px;background:#fff;border:1px solid #d9d9d9;border-radius:2.4px;box-sizing:border-box"></div>
<span class="t" style="left:1376.30px;top:910px;font-size:16.8px;line-height:22px;color:#1a1a1a;font-family:'Liberation Serif', serif;text-decoration:underline;text-decoration-thickness:1px;text-underline-offset:1px;">3</span>
<div style="left:1409.3px;top:902px;width:38.4px;height:38.6px;background:#fff;border:1px solid #d9d9d9;border-radius:2.4px;box-sizing:border-box"></div>
<span class="t" style="left:1424.30px;top:910px;font-size:16.8px;line-height:22px;color:#1a1a1a;font-family:'Liberation Serif', serif;text-decoration:underline;text-decoration-thickness:1px;text-underline-offset:1px;">4</span>
<div style="left:1457.3px;top:902px;width:38.4px;height:38.6px;background:#fff;border:1px solid #d9d9d9;border-radius:2.4px;box-sizing:border-box"></div>
<span class="t" style="left:1472.30px;top:910px;font-size:16.8px;line-height:22px;color:#1a1a1a;font-family:'Liberation Serif', serif;text-decoration:underline;text-decoration-thickness:1px;text-underline-offset:1px;">5</span>
<div style="left:1505.3px;top:902px;width:38.4px;height:38.6px;background:#fff;border:1px solid #d9d9d9;border-radius:2.4px;box-sizing:border-box"></div>
<span class="t" style="left:1520.30px;top:910px;font-size:16.8px;line-height:22px;color:#1a1a1a;font-family:'Liberation Serif', serif;text-decoration:underline;text-decoration-thickness:1px;text-underline-offset:1px;">6</span>
<div style="left:1553.3px;top:902px;width:38.4px;height:38.6px;background:#fff;border:1px solid #d9d9d9;border-radius:2.4px;box-sizing:border-box"></div>
<span class="t" style="left:1568.30px;top:910px;font-size:16.8px;line-height:22px;color:#1a1a1a;font-family:'Liberation Serif', serif;text-decoration:underline;text-decoration-thickness:1px;text-underline-offset:1px;">7</span>
<div style="left:1601.3px;top:902px;width:38.4px;height:38.6px;background:#fff;border:1px solid #d9d9d9;border-radius:2.4px;box-sizing:border-box"></div>
<span class="t" style="left:1616.30px;top:910px;font-size:16.8px;line-height:22px;color:#1a1a1a;font-family:'Liberation Serif', serif;text-decoration:underline;text-decoration-thickness:1px;text-underline-offset:1px;">8</span>
<div style="left:1649.3px;top:902px;width:38.4px;height:38.6px;background:#fff;border:1px solid #d9d9d9;border-radius:2.4px;box-sizing:border-box"></div>
<span class="t" style="left:1664.30px;top:910px;font-size:16.8px;line-height:22px;color:#1a1a1a;font-family:'Liberation Serif', serif;text-decoration:underline;text-decoration-thickness:1px;text-underline-offset:1px;">9</span>
<div style="left:1697.3px;top:902px;width:38.4px;height:38.6px;background:#fff;border:1px solid #d9d9d9;border-radius:2.4px;box-sizing:border-box"></div>
<svg style="position:absolute;left:1708.3px;top:913px;" width="16" height="18" viewBox="0 0 16 18"><path d="M4.7 4.6 L11.4 10.2 L4.7 15.8" fill="none" stroke="#262626" stroke-width="1.4" stroke-linecap="butt" stroke-linejoin="miter"/></svg>
<div style="left:1755px;top:902px;width:121px;height:38.6px;background:#fff;border:1px solid #d9d9d9;border-radius:2.4px;box-sizing:border-box"></div>
<span class="t" style="left:1769.60px;top:912px;font-size:16.8px;line-height:22px;color:#262626;transform:scaleX(1.0000);transform-origin:0 0;">10 / page</span>
<svg style="position:absolute;left:1847px;top:913.2px;" width="16" height="16" viewBox="0 0 16 16"><path d="M2.4 4.4 L8.2 10.8 L14 4.4" fill="none" stroke="#bfbfbf" stroke-width="1.3" stroke-linecap="butt" stroke-linejoin="miter"/></svg>
<div style="left:1612px;top:352px;width:176px;height:393.5px;background:#fff;border-radius:2.4px;box-shadow:0 3.6px 7.2px -4.8px rgba(0,0,0,.12),0 7.2px 19.2px 0 rgba(0,0,0,.08),0 10.8px 33.6px 9.6px rgba(0,0,0,.05);z-index:20"></div>
<span class="t" style="left:1625.80px;top:367px;font-size:16.8px;line-height:22px;color:#262626;transform:scaleX(1.0131);transform-origin:0 0;z-index:21;">Edit</span>
<span class="t" style="left:1625.80px;top:406px;font-size:16.8px;line-height:22px;color:#262626;transform:scaleX(0.9799);transform-origin:0 0;z-index:21;">Preview and Publish</span>
<span class="t" style="left:1625.80px;top:444px;font-size:16.8px;line-height:22px;color:#262626;transform:scaleX(0.9970);transform-origin:0 0;z-index:21;">Archive</span>
<span class="t" style="left:1625.80px;top:482px;font-size:16.8px;line-height:22px;color:#262626;transform:scaleX(0.9771);transform-origin:0 0;z-index:21;">Clone exam</span>
<span class="t" style="left:1625.80px;top:521px;font-size:16.8px;line-height:22px;color:#262626;transform:scaleX(1.0027);transform-origin:0 0;z-index:21;">Copy Instructions</span>
<span class="t" style="left:1625.80px;top:559px;font-size:16.8px;line-height:22px;color:#262626;transform:scaleX(1.0162);transform-origin:0 0;z-index:21;">Copy Configuration</span>
<span class="t" style="left:1625.80px;top:598px;font-size:16.8px;line-height:22px;color:#262626;transform:scaleX(0.9804);transform-origin:0 0;z-index:21;">Edit Email Template</span>
<span class="t" style="left:1625.80px;top:636px;font-size:16.8px;line-height:22px;color:#262626;transform:scaleX(0.9531);transform-origin:0 0;z-index:21;">Send Email</span>
<span class="t" style="left:1625.80px;top:674px;font-size:16.8px;line-height:22px;color:#262626;transform:scaleX(0.9866);transform-origin:0 0;z-index:21;">Manage Candidates</span>
<span class="t" style="left:1625.80px;top:713px;font-size:16.8px;line-height:22px;color:#262626;transform:scaleX(1.0043);transform-origin:0 0;z-index:21;">AddOns</span>
<div style="left:1610.5px;top:621px;width:179.5px;height:48.6px;border:6px solid #8cef7b;box-sizing:border-box;z-index:22"></div>
<div style="left:1905px;top:80px;width:10px;height:868px;background:#f1f1f1;z-index:30"></div>
<div style="left:1905px;top:82px;width:9px;height:829px;background:#888;border-radius:4.5px;z-index:31"></div>
</body></html>
